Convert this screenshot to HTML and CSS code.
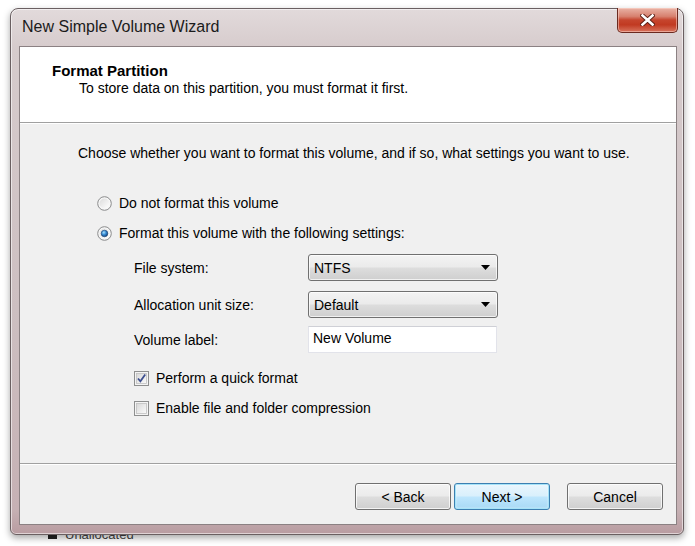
FILE: index.html
```html
<!DOCTYPE html>
<html>
<head>
<meta charset="utf-8">
<title>New Simple Volume Wizard</title>
<link rel="stylesheet" href="styles.css">
</head>
<body>
<div class="window">
  <div class="titlebar">
    <span class="title">New Simple Volume Wizard</span>
    <div class="close">
      <svg width="15" height="12" viewBox="0 0 15 12">
        <path d="M2.5 1.5 L12.5 10.5 M12.5 1.5 L2.5 10.5" stroke="#5a1e14" stroke-width="4.4" stroke-linecap="square"/>
        <path d="M2.5 1.5 L12.5 10.5 M12.5 1.5 L2.5 10.5" stroke="#ffffff" stroke-width="2.6" stroke-linecap="square"/>
      </svg>
    </div>
  </div>
  <div class="client">
    <div class="header">
      <div class="h-title">Format Partition</div>
      <div class="h-sub">To store data on this partition, you must format it first.</div>
    </div>
    <div class="content">
      <div class="intro">Choose whether you want to format this volume, and if so, what settings you want to use.</div>
      <div class="radio-row first">
        <svg class="radio" width="15" height="15" viewBox="0 0 15 15">
          <defs>
            <linearGradient id="rg" x1="0" y1="0" x2="1" y2="1">
              <stop offset="0" stop-color="#dcdcdc"/>
              <stop offset="1" stop-color="#ffffff"/>
            </linearGradient>
          </defs>
          <circle cx="7.5" cy="7.5" r="6.8" fill="#f6f6f6" stroke="#8a8b8c" stroke-width="1"/>
          <circle cx="7.5" cy="7.5" r="5" fill="url(#rg)"/>
        </svg>
        <span>Do not format this volume</span>
      </div>
      <div class="radio-row">
        <svg class="radio" width="15" height="15" viewBox="0 0 15 15">
          <defs>
            <radialGradient id="dot" cx="0.4" cy="0.35" r="0.7">
              <stop offset="0" stop-color="#a8e0fb"/>
              <stop offset="0.45" stop-color="#3a8ed6"/>
              <stop offset="1" stop-color="#0d3a74"/>
            </radialGradient>
          </defs>
          <circle cx="7.5" cy="7.5" r="6.8" fill="#f6f6f6" stroke="#8a8b8c" stroke-width="1"/>
          <circle cx="7.5" cy="7.5" r="5" fill="url(#rg)"/>
          <circle cx="7.5" cy="7.5" r="3.3" fill="url(#dot)" stroke="#1b3f6e" stroke-width="0.6"/>
        </svg>
        <span>Format this volume with the following settings:</span>
      </div>
      <div class="settings">
        <div class="field">
          <span class="label">File system:</span>
          <div class="combo"><span>NTFS</span>
            <svg width="9" height="5" viewBox="0 0 9 5"><path d="M0 0 H9 L4.5 5 Z" fill="#000"/></svg>
          </div>
        </div>
        <div class="field">
          <span class="label">Allocation unit size:</span>
          <div class="combo"><span>Default</span>
            <svg width="9" height="5" viewBox="0 0 9 5"><path d="M0 0 H9 L4.5 5 Z" fill="#000"/></svg>
          </div>
        </div>
        <div class="field tight">
          <span class="label">Volume label:</span>
          <div class="textbox">New Volume</div>
        </div>
        <div class="check-row first">
          <svg class="check" width="15" height="15" viewBox="0 0 15 15">
            <defs>
              <linearGradient id="cg" x1="0" y1="0" x2="1" y2="1">
                <stop offset="0" stop-color="#d8d8d8"/>
                <stop offset="1" stop-color="#fbfbfb"/>
              </linearGradient>
            </defs>
            <rect x="0.5" y="0.5" width="14" height="14" fill="#f4f4f4" stroke="#8e8f8f"/>
            <rect x="2.5" y="2.5" width="10" height="10" fill="url(#cg)" stroke="#c0c0c0" stroke-width="0.8"/>
            <path d="M4 7.5 L6.4 10.3 L11.2 3.6" fill="none" stroke="#3d4f8f" stroke-width="1.8"/>
          </svg>
          <span>Perform a quick format</span>
        </div>
        <div class="check-row">
          <svg class="check" width="15" height="15" viewBox="0 0 15 15">
            <rect x="0.5" y="0.5" width="14" height="14" fill="#f4f4f4" stroke="#8e8f8f"/>
            <rect x="2.5" y="2.5" width="10" height="10" fill="url(#cg)" stroke="#c0c0c0" stroke-width="0.8"/>
          </svg>
          <span>Enable file and folder compression</span>
        </div>
      </div>
    </div>
    <div class="footer">
      <button class="btn">&lt; Back</button>
      <button class="btn default">Next &gt;</button>
      <button class="btn cancel">Cancel</button>
    </div>
  </div>
</div>
<div class="behind"><span class="sq"></span>Unallocated</div>
</body>
</html>
```
FILE: styles.css
```css
html, body {
  margin: 0;
  padding: 0;
  background: #ffffff;
  overflow: hidden;
}
body {
  font-family: "Liberation Sans", Arial, sans-serif;
  font-size: 14px;
  color: #000;
  width: 695px;
  height: 546px;
}
.window {
  position: relative;
  z-index: 2;
  box-sizing: border-box;
  width: 674px;
  height: 527px;
  margin: 8px 0 0 10px;
  border: 1px solid #6a5f61;
  border-radius: 8px 8px 6px 6px;
  background: linear-gradient(to bottom, #e2dadb 0px, #d6cbcc 40px, #cdbfc1 300px, #c6b1b4 500px, #b99ca1 100%);
  box-shadow: inset 0 0 0 1px rgba(255,255,255,0.55), 0 3px 7px rgba(0,0,0,0.35);
  padding: 0 6px 9px 8px;
  display: flex;
  flex-direction: column;
}
.titlebar {
  position: relative;
  height: 37px;
  flex: none;
}
.title {
  display: block;
  margin-left: 3px;
  padding-top: 9px;
  font-size: 16px;
  line-height: 18px;
  color: #1b1b1b;
}
.close {
  position: absolute;
  top: -1px;
  right: -1px;
  width: 61px;
  height: 25px;
  box-sizing: border-box;
  border: 1px solid #6b2a20;
  border-top: none;
  border-radius: 0 0 5px 5px;
  background: linear-gradient(to bottom, #e9b3a6 0%, #d7816f 35%, #c6452e 50%, #c13a22 70%, #d8745e 100%);
  box-shadow: inset 0 0 0 1px rgba(255,220,210,0.5);
  display: flex;
  align-items: center;
  justify-content: center;
}
.close svg { margin-top: -1px; }
.client {
  flex: 1;
  display: flex;
  flex-direction: column;
  border: 1px solid #8b8183;
  background: #f0f0f0;
}
.header {
  flex: none;
  height: 76px;
  box-sizing: border-box;
  background: #ffffff;
  border-bottom: 1px solid #a0a0a0;
  box-shadow: 0 1px 0 #ffffff;
  padding: 15px 0 0 32px;
}
.h-title {
  font-weight: bold;
  font-size: 15px;
  line-height: 17px;
}
.h-sub {
  margin: 1px 0 0 27px;
  line-height: 16px;
}
.content {
  flex: 1;
  padding: 22px 0 0 58px;
}
.intro {
  line-height: 16px;
}
.radio-row {
  display: flex;
  align-items: center;
  height: 20px;
  margin: 10px 0 0 19px;
}
.radio-row.first {
  margin-top: 32px;
}
.radio {
  flex: none;
  margin-right: 7px;
}
.settings {
  margin: 11px 0 0 56px;
}
.field {
  display: flex;
  align-items: center;
  margin-bottom: 10px;
}
.field.tight {
  margin-top: -2px;
  margin-bottom: 0;
}
.label {
  width: 174px;
  flex: none;
}
.combo {
  box-sizing: border-box;
  width: 190px;
  height: 27px;
  border: 1px solid #707070;
  border-radius: 3px;
  background: linear-gradient(to bottom, #f3f3f3 0%, #ebebeb 48%, #dddddd 52%, #cfcfcf 100%);
  box-shadow: inset 0 0 0 1px rgba(255,255,255,0.7);
  display: flex;
  align-items: center;
  justify-content: space-between;
  padding: 0 7px 0 5px;
}
.combo svg { flex: none; }
.textbox {
  box-sizing: border-box;
  width: 189px;
  height: 27px;
  background: #ffffff;
  border: 1px solid #e2e3ea;
  border-top-color: #cfd0d6;
  padding: 3px 0 0 4px;
  line-height: 16px;
}
.check-row {
  display: flex;
  align-items: center;
  height: 20px;
  margin-top: 10px;
}
.check-row.first {
  margin-top: 15px;
}
.check {
  flex: none;
  margin-right: 7px;
}
.footer {
  flex: none;
  height: 61px;
  box-sizing: border-box;
  border-top: 1px solid #a0a0a0;
  box-shadow: inset 0 1px 0 #ffffff;
  display: flex;
  justify-content: flex-end;
  align-items: flex-start;
  padding: 19px 13px 0 0;
}
.btn {
  box-sizing: border-box;
  width: 96px;
  height: 27px;
  margin: 0;
  font-family: "Liberation Sans", Arial, sans-serif;
  font-size: 14px;
  color: #000;
  border: 1px solid #707070;
  border-radius: 3px;
  background: linear-gradient(to bottom, #f3f3f3 0%, #ebebeb 48%, #dddddd 52%, #cfcfcf 100%);
  box-shadow: inset 0 0 0 1px rgba(255,255,255,0.75);
  padding: 0;
}
.btn.default {
  margin-left: 3px;
  border-color: #3c7fb1;
  background: linear-gradient(to bottom, #eaf6fd 0%, #d9f0fc 48%, #bee6fd 52%, #a7d9f5 100%);
  box-shadow: inset 0 0 0 1px #a6e3f8, inset 0 0 2px 1px rgba(255,255,255,0.6);
}
.btn.cancel {
  margin-left: 17px;
}
.behind {
  position: relative;
  z-index: 1;
  margin: -8px 0 0 48px;
  font-size: 13px;
  line-height: 15px;
  color: #444;
  display: flex;
  align-items: center;
}
.sq {
  width: 9px;
  height: 9px;
  background: #222;
  margin-right: 8px;
}
```
